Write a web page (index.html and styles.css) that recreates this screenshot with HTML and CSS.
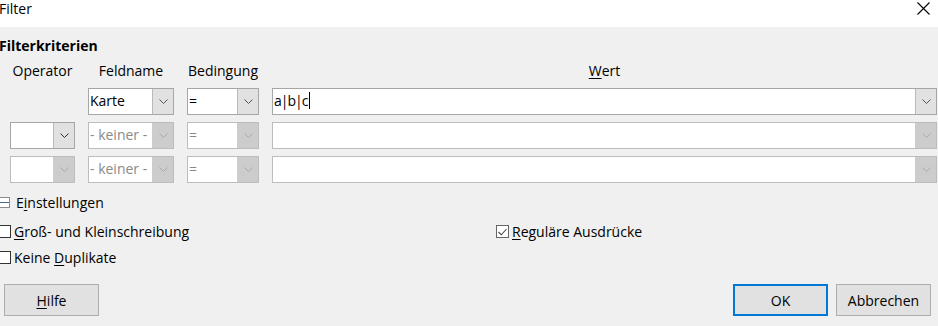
FILE: index.html
```
<!DOCTYPE html>
<html lang="de">
<head>
    <meta charset="UTF-8">
    <title>Filter</title>
    <link rel="stylesheet" href="styles.css">
</head>
<body>
    <div class="titlebar">
        <span class="title">Filter</span>
        <svg class="close" width="13" height="13" viewBox="0 0 13 13">
            <path d="M0.5 0.5 L12.5 12.5 M12.5 0.5 L0.5 12.5" stroke="#000" stroke-width="1.1" fill="none"/>
        </svg>
    </div>

    <div class="dialog">
        <h2 class="section-title">Filterkriterien</h2>

        <div class="criteria">
            <div class="head">Operator</div>
            <div class="head">Feldname</div>
            <div class="head">Bedingung</div>
            <div class="head"><u>W</u>ert</div>

            <div></div>
            <div class="combo">
                <span class="combo-text">Karte</span>
                <span class="combo-btn"><svg width="9" height="5" viewBox="0 0 9 5"><path d="M0.5 0.5 L4.5 4.5 L8.5 0.5" stroke="#555" fill="none"/></svg></span>
            </div>
            <div class="combo">
                <span class="combo-text">=</span>
                <span class="combo-btn"><svg width="9" height="5" viewBox="0 0 9 5"><path d="M0.5 0.5 L4.5 4.5 L8.5 0.5" stroke="#555" fill="none"/></svg></span>
            </div>
            <div class="combo">
                <span class="combo-text tight">a|b|c<span class="caret"></span></span>
                <span class="combo-btn"><svg width="9" height="5" viewBox="0 0 9 5"><path d="M0.5 0.5 L4.5 4.5 L8.5 0.5" stroke="#555" fill="none"/></svg></span>
            </div>

            <div class="combo">
                <span class="combo-text"></span>
                <span class="combo-btn"><svg width="9" height="5" viewBox="0 0 9 5"><path d="M0.5 0.5 L4.5 4.5 L8.5 0.5" stroke="#333" fill="none"/></svg></span>
            </div>
            <div class="combo disabled">
                <span class="combo-text">- keiner -</span>
                <span class="combo-btn"><svg width="9" height="5" viewBox="0 0 9 5"><path d="M0.5 0.5 L4.5 4.5 L8.5 0.5" stroke="#aaa" fill="none"/></svg></span>
            </div>
            <div class="combo disabled">
                <span class="combo-text">=</span>
                <span class="combo-btn"><svg width="9" height="5" viewBox="0 0 9 5"><path d="M0.5 0.5 L4.5 4.5 L8.5 0.5" stroke="#aaa" fill="none"/></svg></span>
            </div>
            <div class="combo disabled">
                <span class="combo-text"></span>
                <span class="combo-btn"><svg width="9" height="5" viewBox="0 0 9 5"><path d="M0.5 0.5 L4.5 4.5 L8.5 0.5" stroke="#aaa" fill="none"/></svg></span>
            </div>

            <div class="combo disabled">
                <span class="combo-text"></span>
                <span class="combo-btn"><svg width="9" height="5" viewBox="0 0 9 5"><path d="M0.5 0.5 L4.5 4.5 L8.5 0.5" stroke="#aaa" fill="none"/></svg></span>
            </div>
            <div class="combo disabled">
                <span class="combo-text">- keiner -</span>
                <span class="combo-btn"><svg width="9" height="5" viewBox="0 0 9 5"><path d="M0.5 0.5 L4.5 4.5 L8.5 0.5" stroke="#aaa" fill="none"/></svg></span>
            </div>
            <div class="combo disabled">
                <span class="combo-text">=</span>
                <span class="combo-btn"><svg width="9" height="5" viewBox="0 0 9 5"><path d="M0.5 0.5 L4.5 4.5 L8.5 0.5" stroke="#aaa" fill="none"/></svg></span>
            </div>
            <div class="combo disabled">
                <span class="combo-text"></span>
                <span class="combo-btn"><svg width="9" height="5" viewBox="0 0 9 5"><path d="M0.5 0.5 L4.5 4.5 L8.5 0.5" stroke="#aaa" fill="none"/></svg></span>
            </div>
        </div>

        <div class="expander">
            <span class="minus-box"></span>
            <span>E<u>i</u>nstellungen</span>
        </div>

        <div class="options">
            <div class="option-col">
                <label class="check"><span class="box"></span><span><u>G</u>roß- und Kleinschreibung</span></label>
                <label class="check"><span class="box"></span><span>Keine <u>D</u>uplikate</span></label>
            </div>
            <div class="option-col">
                <label class="check checked">
                    <span class="box"><svg width="9" height="8" viewBox="0 0 9 8"><path d="M0.5 4 L3.3 6.8 L8.5 1" stroke="#444" stroke-width="1.1" fill="none"/></svg></span>
                    <span><u>R</u>eguläre Ausdrücke</span>
                </label>
            </div>
        </div>

        <div class="buttons">
            <button class="button"><u>H</u>ilfe</button>
            <div class="spacer"></div>
            <button class="button default">OK</button>
            <button class="button">Abbrechen</button>
        </div>
    </div>
</body>
</html>
```

FILE: styles.css
```
* {
    margin: 0;
    padding: 0;
    box-sizing: border-box;
}
body {
    font-family: "Open Sans", "Noto Sans", sans-serif;
    font-size: 14px;
    color: #000;
    background-color: #f0f0f0;
    width: 938px;
    height: 326px;
    overflow: hidden;
}
u {
    text-decoration: underline;
    text-underline-offset: 2px;
}

.titlebar {
    height: 27px;
    background: #ffffff;
    display: flex;
    align-items: flex-start;
    justify-content: space-between;
    padding: 0 8px 0 0;
}
.title {
    font-size: 14px;
    line-height: 17px;
    margin-left: -1px;
}
.close {
    margin-top: 2px;
}

.section-title {
    font-size: 14px;
    font-weight: bold;
    line-height: 20px;
    margin: 9px 0 0 -1px;
}

.criteria {
    display: grid;
    grid-template-columns: 65px 86px 72px 1fr;
    grid-template-rows: 25px;
    grid-auto-rows: 27px;
    column-gap: 13px;
    row-gap: 7px;
    padding: 0 1px 0 10px;
}
.head {
    text-align: center;
    line-height: 20px;
    padding-top: 5px;
}
.combo {
    display: flex;
    background: #ffffff;
    border: 1px solid #a6a6a6;
    height: 27px;
}
.combo-text {
    flex: 1;
    padding-left: 1px;
    line-height: 24px;
    white-space: nowrap;
    overflow: hidden;
}
.combo-text.tight {
    letter-spacing: -1px;
}
.caret {
    display: inline-block;
    width: 1px;
    height: 17px;
    background: #000;
    vertical-align: -3px;
    margin-left: 2px;
}
.combo-btn {
    width: 21px;
    background: #e1e1e1;
    border-left: 1px solid #b9b9b9;
    display: flex;
    align-items: center;
    justify-content: center;
}
.combo.disabled {
    border-color: #bdbdbd;
}
.combo.disabled .combo-text {
    color: #8a8a8a;
}
.combo.disabled .combo-btn {
    background: #cccccc;
    border-left-color: #cccccc;
}

.expander {
    display: flex;
    align-items: center;
    gap: 6px;
    margin-top: 7px;
    height: 24px;
}
.minus-box {
    width: 12px;
    height: 11px;
    margin-left: -2px;
    border: 1px solid #8c8c8c;
    background: linear-gradient(#4a6a90, #4a6a90) center / 10px 1px no-repeat, #ffffff;
}

.options {
    display: flex;
    margin-top: 5px;
}
.option-col {
    display: flex;
    flex-direction: column;
    gap: 1px;
}
.option-col:first-child {
    width: 496px;
}
.check {
    display: flex;
    align-items: center;
    gap: 3px;
    height: 25px;
}
.options .option-col:first-child .box {
    margin-left: -2px;
}
.box {
    width: 13px;
    height: 13px;
    border: 1px solid #333333;
    background: #ffffff;
    display: flex;
    align-items: center;
    justify-content: center;
}
.checked .box {
    border-color: #666666;
}

.buttons {
    display: flex;
    gap: 8px;
    padding: 0 7px 0 4px;
    margin-top: 14px;
}
.spacer {
    flex: 1;
}
.button {
    width: 95px;
    height: 32px;
    font-family: inherit;
    font-size: 14px;
    background: #e1e1e1;
    border: 1px solid #adadad;
    color: #000;
}
.button.default {
    border: 2px solid #0078d7;
}
```
